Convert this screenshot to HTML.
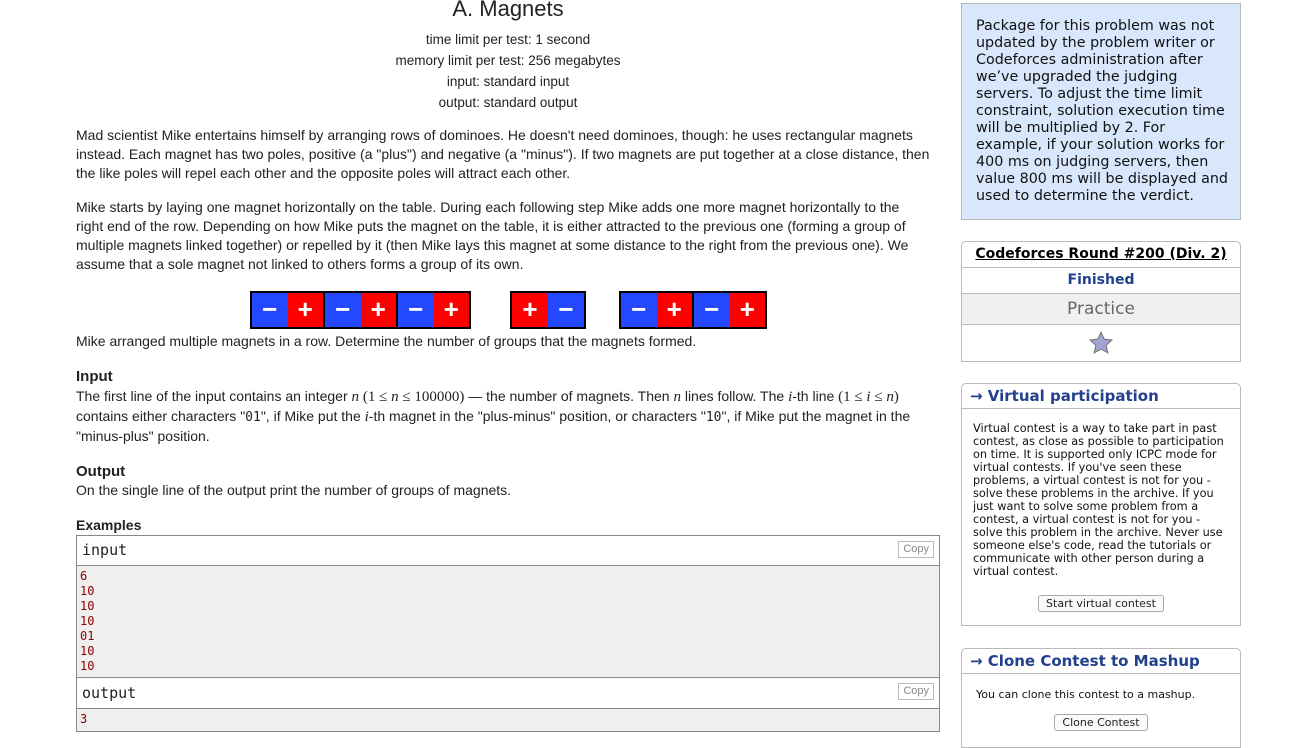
<!DOCTYPE html>
<html><head><meta charset="utf-8"><style>
body{margin:0;width:1300px;height:738px;overflow:hidden;background:#fff;font-family:"Liberation Sans",Arial,sans-serif;color:#222;position:relative}
.a{position:absolute}
.t{font-size:14px;line-height:19px;width:864px;left:76px}
.c{text-align:center;width:864px;left:76px;font-size:13.5px;line-height:21px}
.m{position:absolute;top:291px;height:38px;border:2px solid #000;box-sizing:border-box;display:flex}
.m span{flex:1;color:#fff;font-weight:bold;font-size:26px;text-align:center;line-height:33px}
.m span:nth-child(2n){border-right:2px solid #000}
.B{background:#2448ff}.R{background:#ff0000}
.ex{position:absolute;left:76px;width:864px;border:1px solid #888;box-sizing:border-box}
.hd{font-family:"DejaVu Sans Mono",monospace;font-size:15px;padding-left:5px;background:#fff;border-bottom:1px solid #888;position:relative}
.cp{position:absolute;right:5px;top:5px;font-family:"Liberation Sans",sans-serif;font-size:11px;color:#888;border:1px solid #bbb;padding:0 4px;line-height:15px}
pre{margin:0;background:#efefef;font-family:"DejaVu Sans Mono",monospace;font-size:12px;line-height:15px;color:#8b0000;padding:3px 3px}
.sb{font-family:"DejaVu Sans",Verdana,sans-serif}
.box{position:absolute;left:961px;width:280px;border:1px solid #b9b9b9;box-sizing:border-box;border-radius:5px 5px 0 0}
.bh{color:#22408c;font-weight:bold;font-size:15px;padding:3px 8px;border-bottom:1px solid #b9b9b9}
.btn{display:inline-block;border:1px solid #aaa;border-radius:3px;font-size:11px;padding:1px 7px;background:#fafafa}
.s{font-family:'Liberation Serif',serif;font-size:15px}
</style></head><body>
<div class="a c" style="top:-4px;font-size:22px;line-height:26px">A. Magnets</div>
<div class="a c" style="top:29px">time limit per test: 1 second<br>memory limit per test: 256 megabytes<br>input: standard input<br>output: standard output</div>
<div class="a t" style="top:126px">Mad scientist Mike entertains himself by arranging rows of dominoes. He doesn't need dominoes, though: he uses rectangular magnets instead. Each magnet has two poles, positive (a "plus") and negative (a "minus"). If two magnets are put together at a close distance, then the like poles will repel each other and the opposite poles will attract each other.</div>
<div class="a t" style="top:198px">Mike starts by laying one magnet horizontally on the table. During each following step Mike adds one more magnet horizontally to the<br>right end of the row. Depending on how Mike puts the magnet on the table, it is either attracted to the previous one (forming a group of<br>multiple magnets linked together) or repelled by it (then Mike lays this magnet at some distance to the right from the previous one). We<br>assume that a sole magnet not linked to others forms a group of its own.</div>
<div class="m" style="left:250px;width:221px"><span class="B">−</span><span class="R">+</span><span class="B">−</span><span class="R">+</span><span class="B">−</span><span class="R" style="border:none">+</span></div>
<div class="m" style="left:510px;width:76px"><span class="R">+</span><span class="B" style="border:none">−</span></div>
<div class="m" style="left:619px;width:148px"><span class="B">−</span><span class="R">+</span><span class="B">−</span><span class="R" style="border:none">+</span></div>
<div class="a t" style="top:332px">Mike arranged multiple magnets in a row. Determine the number of groups that the magnets formed.</div>
<div class="a t" style="top:367px;font-weight:bold;font-size:15px">Input</div>
<div class="a t" style="top:387px">The first line of the input contains an integer <i class="s">n</i> <span class="s">(1 ≤ <i>n</i> ≤ 100000)</span> — the number of magnets. Then <i class="s">n</i> lines follow. The <i class="s">i</i>-th line <span class="s">(1 ≤ <i>i</i> ≤ <i>n</i>)</span> contains either characters "<span style="font-family:'DejaVu Sans Mono',monospace;font-size:13px">01</span>", if Mike put the <i class="s">i</i>-th magnet in the "plus-minus" position, or characters "<span style="font-family:'DejaVu Sans Mono',monospace;font-size:13px">10</span>", if Mike put the magnet in the "minus-plus" position.</div>
<div class="a t" style="top:462px;font-weight:bold;font-size:15px">Output</div>
<div class="a t" style="top:481px">On the single line of the output print the number of groups of magnets.</div>
<div class="a t" style="top:516px;font-weight:bold">Examples</div>
<div class="ex" style="top:535px">
<div class="hd" style="height:29px;line-height:29px">input<span class="cp">Copy</span></div>
<pre style="height:105px">6
10
10
10
01
10
10</pre>
<div class="hd" style="height:30px;line-height:30px;border-top:1px solid #888">output<span class="cp">Copy</span></div>
<pre style="height:16px">3</pre>
</div>
<div class="sb">
<div class="a" style="left:961px;top:3px;width:280px;height:217px;box-sizing:border-box;border:1px solid #b9b9b9;background:#d8e7fb;padding:14px 10px 14px 14px;font-size:14.3px;line-height:17px;color:#111">Package for this problem was not updated by the problem writer or Codeforces administration after we’ve upgraded the judging servers. To adjust the time limit constraint, solution execution time will be multiplied by 2. For example, if your solution works for 400 ms on judging servers, then value 800 ms will be displayed and used to determine the verdict.</div>
<div class="box" style="top:241px;height:121px;text-align:center">
<div style="height:25px;line-height:25px;font-weight:bold;font-size:14px;text-decoration:underline;border-bottom:1px solid #b9b9b9;color:#000">Codeforces Round #200 (Div. 2)</div>
<div style="height:25px;line-height:25px;font-weight:bold;font-size:14px;color:#22408c;border-bottom:1px solid #b9b9b9">Finished</div>
<div style="height:30px;line-height:30px;font-size:17px;color:#666;background:#f0f0f0;border-bottom:1px solid #b9b9b9">Practice</div>
<div style="height:36px"><svg width="26" height="26" viewBox="0 0 24 24" style="margin-top:5px"><path d="M12 2l3 6.5 7 .8-5.2 4.8 1.5 7L12 17.6 5.7 21.1l1.5-7L2 9.3l7-.8z" fill="#a3a3d8" stroke="#777" stroke-width="1"/></svg></div>
</div>
<div class="box" style="top:383px;height:243px">
<div class="bh">→ Virtual participation</div>
<div style="font-size:11.3px;line-height:13px;padding:13px 14px 0 11px;color:#111">Virtual contest is a way to take part in past contest, as close as possible to participation on time. It is supported only ICPC mode for virtual contests. If you've seen these problems, a virtual contest is not for you - solve these problems in the archive. If you just want to solve some problem from a contest, a virtual contest is not for you - solve this problem in the archive. Never use someone else's code, read the tutorials or communicate with other person during a virtual contest.</div>
<div style="text-align:center;margin-top:14px"><span class="btn">Start virtual contest</span></div>
</div>
<div class="box" style="top:648px;height:100px">
<div class="bh">→ Clone Contest to Mashup</div>
<div style="font-size:11px;padding:14px 14px 0;color:#111">You can clone this contest to a mashup.</div>
<div style="text-align:center;margin-top:10px"><span class="btn">Clone Contest</span></div>
</div>
</div>
</body></html>
